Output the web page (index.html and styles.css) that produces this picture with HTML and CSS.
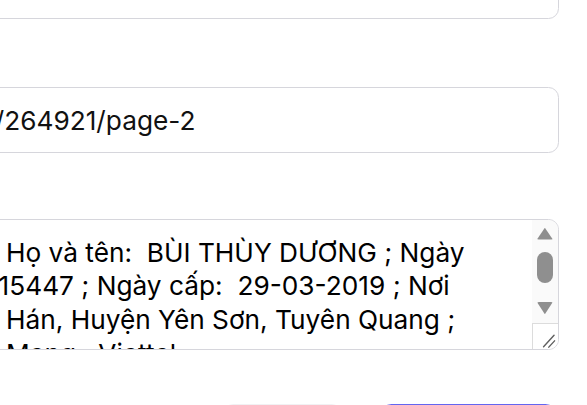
FILE: index.html
```html
<!DOCTYPE html>
<html lang="vi">
<head>
<meta charset="utf-8">
<title>Form</title>
<link rel="stylesheet" href="styles.css">
</head>
<body>
<main class="page">
  <form class="form">
    <div class="field field-first">
      <input class="input" type="text" value="" aria-label="Tiêu đề">
    </div>
    <div class="field field-link">
      <input class="input" type="text" value="/264921/page-2" aria-label="Đường dẫn">
    </div>
    <div class="field field-info">
      <div class="textbox">
        <textarea class="textarea" wrap="off" aria-label="Thông tin"> Họ và tên:  BÙI THÙY DƯƠNG ; Ngày
15447 ; Ngày cấp:  29-03-2019 ; Nơi
 Hán, Huyện Yên Sơn, Tuyên Quang ;
 Mạng:  Viettel</textarea>
        <div class="scrollbar" aria-hidden="true">
          <div class="sb-btn sb-up"><span class="arrow arrow-up"></span></div>
          <div class="sb-track"><span class="sb-thumb"></span></div>
          <div class="sb-btn sb-down"><span class="arrow arrow-down"></span></div>
          <div class="sb-corner">
            <svg class="grip" viewBox="0 0 15 15" width="15" height="15">
              <line x1="12.6" y1="7" x2="6.6" y2="13.6" />
              <line x1="12.9" y1="10.2" x2="9.6" y2="13.8" />
            </svg>
          </div>
        </div>
      </div>
    </div>
    <div class="actions">
      <button type="button" class="btn btn-secondary" aria-label="Hủy"></button>
      <button type="submit" class="btn btn-primary" aria-label="Lưu"></button>
    </div>
  </form>
</main>
</body>
</html>
```
FILE: styles.css
```css
html, body {
  margin: 0;
  padding: 0;
  background: #ffffff;
  overflow: hidden;
}

.page {
  zoom: 1.75;
  font-family: "Inter", "Noto Sans", sans-serif;
  padding-right: 16px;
}

.form {
  display: flex;
  flex-direction: column;
  margin-top: -27.2px;
  margin-left: -20px;
}

.field-link {
  margin-top: 38.8px;
}

.field-info {
  margin-top: 37.6px;
}

.input {
  display: block;
  box-sizing: border-box;
  width: 100%;
  height: 38px;
  padding: 0 10px 0 16.4px;
  border: 1px solid #d6d6dc;
  border-radius: 6px;
  font-family: "Inter", "Noto Sans", sans-serif;
  font-size: 15px;
  color: #111111;
  background: #ffffff;
  outline: none;
}

.textbox {
  display: flex;
  box-sizing: border-box;
  height: 75px;
  border: 1px solid #d6d6dc;
  border-radius: 6px;
  overflow: hidden;
  background: #ffffff;
}

.textarea {
  flex: 1;
  min-width: 0;
  box-sizing: border-box;
  height: 100%;
  margin: 0;
  padding: 9px 10px 8px 18.6px;
  border: 0;
  font-family: "Inter", "Noto Sans", sans-serif;
  font-size: 15px;
  line-height: 19.2px;
  color: #000000;
  background: #ffffff;
  white-space: pre;
  overflow: hidden;
  resize: none;
  outline: none;
}

.scrollbar {
  flex: 0 0 15px;
  display: flex;
  flex-direction: column;
  background: #fafafa;
}

.sb-btn {
  flex: 0 0 15px;
  display: flex;
  justify-content: center;
}

.sb-up {
  align-items: flex-start;
  padding-top: 4.4px;
  box-sizing: border-box;
}

.sb-down {
  align-items: flex-start;
  padding-top: 3px;
  box-sizing: border-box;
}

.arrow {
  display: block;
  width: 9.1px;
  background: #8f8f8f;
}

.arrow-up {
  height: 6.7px;
  clip-path: polygon(50% 0, 100% 100%, 0 100%);
  border-radius: 1px;
}

.arrow-down {
  height: 7px;
  clip-path: polygon(0 0, 100% 0, 50% 100%);
  border-radius: 1px;
}

.sb-track {
  flex: 1;
  display: flex;
  flex-direction: column;
  align-items: center;
  padding-top: 3px;
}

.sb-thumb {
  display: block;
  width: 9.1px;
  height: 17.7px;
  border-radius: 4.6px;
  background: #8f8f8f;
}

.sb-corner {
  flex: 0 0 15px;
  box-sizing: border-box;
  background: #ffffff;
  border-top: 0.6px solid #dcdcdc;
  border-left: 0.6px solid #dcdcdc;
  position: relative;
}

.grip {
  display: block;
  position: absolute;
  right: 0;
  bottom: 0;
}

.grip line {
  stroke: #5f5f5f;
  stroke-width: 0.8;
  stroke-linecap: round;
}

.actions {
  display: flex;
  justify-content: flex-end;
  gap: 22px;
  margin-top: 30.8px;
  padding-right: 2px;
}

.btn {
  height: 38px;
  border-radius: 6px;
  font-family: "Inter", "Noto Sans", sans-serif;
  font-size: 15px;
  border: 0;
}

.btn-secondary {
  width: 68px;
  background: #f1f1f3;
}

.btn-primary {
  width: 100px;
  background: #6366f1;
}
```
